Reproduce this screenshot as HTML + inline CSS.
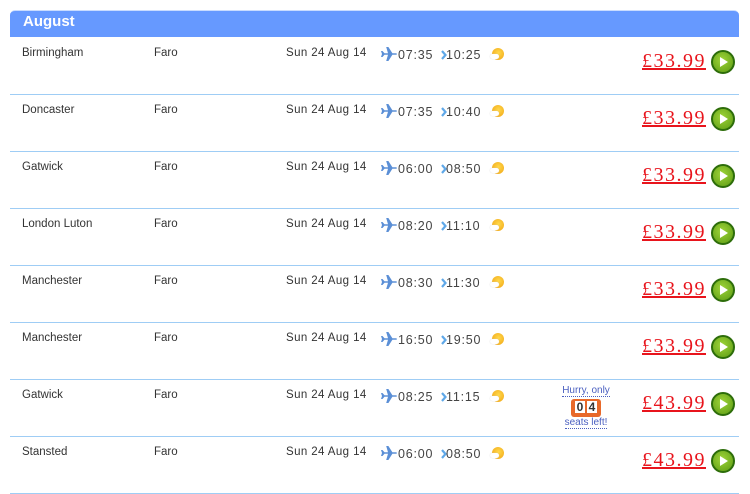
<!DOCTYPE html>
<html><head><meta charset="utf-8"><style>
*{margin:0;padding:0;box-sizing:border-box}
body{width:750px;height:491px;background:#fff;font-family:"Liberation Sans",sans-serif;position:relative;overflow:hidden}
.hdr{position:absolute;left:10px;top:10px;width:729px;height:27px;background:#6699ff;border-radius:5px 5px 0 0;color:#fff;font-weight:bold;font-size:15px;padding:2px 0 0 13px;border-top:1px solid #c9dcff}
.row{position:absolute;left:10px;width:729px;height:57px;border-bottom:1px solid #9fcdf5}
.t{position:absolute;top:9px;font-size:11.5px;color:#333}
.plane{position:absolute;left:371px;top:9px}
.tm{position:absolute;left:388px;top:10px;font-size:12.5px;color:#444;letter-spacing:.8px}
.chev{position:absolute;left:431px;top:12px}
.arr{position:absolute;left:436px;top:10px;font-size:12.5px;color:#444;letter-spacing:.8px}
.sun{position:absolute;left:482px;top:10px;width:12px;height:12px;border-radius:50%;background:radial-gradient(circle at 55% 40%,#ffd84a,#f0a010);}
.sun:after{content:"";position:absolute;left:-2px;top:6px;width:9px;height:5px;background:#fff;border-radius:3px;box-shadow:0 0 1px #ccc}
.price{position:absolute;right:33px;top:12px;font-family:"Liberation Serif",serif;font-size:20px;color:#e8141c;text-decoration:underline;letter-spacing:1.5px}
.go{position:absolute;left:701px;top:12px;width:24px;height:24px;border-radius:50%;background:radial-gradient(circle at 45% 40%,#9fd43a,#5a9a12);border:2px solid #2d6d0a}
.go svg{position:absolute;left:6px;top:4px}
.hurry{position:absolute;left:543px;top:5px;width:66px;text-align:center;font-size:10px;color:#4a5fc0;line-height:12px}
.hurry u{text-decoration:none;border-bottom:1px dotted #4a5fc0}
.dg{display:inline-block;margin:2px 0 0;background:#e8692a;border-radius:3px;padding:2px 3px;line-height:12px}
.dg b{display:inline-block;width:10px;background:#fff;color:#333;font-size:12px;margin:0 1px}
</style></head><body>
<div class="hdr">August</div>
<div id="rows"></div>
<script>
var d=[["Birmingham","07:35","10:25","£33.99"],["Doncaster","07:35","10:40","£33.99"],["Gatwick","06:00","08:50","£33.99"],["London Luton","08:20","11:10","£33.99"],["Manchester","08:30","11:30","£33.99"],["Manchester","16:50","19:50","£33.99"],["Gatwick","08:25","11:15","£43.99"],["Stansted","06:00","08:50","£43.99"]];
var h="";
d.forEach(function(r,i){
h+='<div class="row" style="top:'+(38+i*57)+'px">'+
'<div class="t" style="left:12px">'+r[0]+'</div>'+
'<div class="t" style="left:144px">Faro</div>'+
'<div class="t" style="left:276px;letter-spacing:.4px">Sun 24 Aug 14</div>'+
'<svg class="plane" width="16" height="14" viewBox="0 0 16 14"><path d="M0 4h1.5l2 2.2H7L5.2 0h2.2l4 6.2H15c1.2 0 1.2 1.6 0 1.6h-3.6l-4 6.2H5.2L7 7.8H3.5l-2 2.2H0l1-3z" fill="#5b8fd6"/></svg>'+
'<div class="tm">'+r[1]+'</div>'+
'<svg class="chev" width="6" height="10"><path d="M1 1l3.5 4L1 9" stroke="#5fa8e8" stroke-width="2.2" fill="none"/></svg>'+
'<div class="arr">'+r[2]+'</div><div class="sun"></div>'+
(i==6?'<div class="hurry"><u>Hurry, only</u><br><span class="dg"><b>0</b><b>4</b></span><br><u>seats left!</u></div>':'')+
'<div class="price">'+r[3]+'</div>'+
'<div class="go"><svg width="10" height="12"><path d="M1 1l8 5-8 5z" fill="#fff"/></svg></div>'+
'</div>';});
document.getElementById("rows").innerHTML=h;
</script>
</body></html>
